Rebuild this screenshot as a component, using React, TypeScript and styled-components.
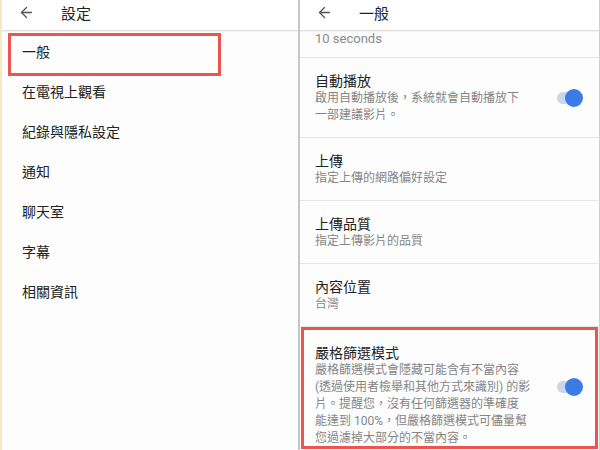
import React from 'react'
import styled, { createGlobalStyle } from 'styled-components'
import { ArrowLeft } from 'lucide-react'

const GlobalStyle = createGlobalStyle`
  body {
    margin: 0;
    background: #fdfdfd;
    font-family: "Roboto", "Noto Sans CJK TC", sans-serif;
  }
`

const Screen = styled.div`
  display: flex;
  width: 600px;
  height: 450px;
  overflow: hidden;
  background: #fdfdfd;
`

const Panel = styled.div<{ $left?: boolean }>`
  display: flex;
  flex-direction: column;
  width: ${p => (p.$left ? '298px' : '302px')};
  flex-shrink: 0;
  overflow: hidden;
  background: #fdfdfd;
  border-left: ${p => (p.$left ? '2px solid #f6e9c2' : '2px solid #c6c6c6')};
  border-right: ${p => (p.$left ? 'none' : '1px solid #cfcfcf')};
  box-sizing: border-box;

  & > * {
    flex-shrink: 0;
  }
`

const Header = styled.div`
  display: flex;
  align-items: center;
  height: 31px;
  padding: 0 0 5px 16px;
  gap: 26px;
  border-bottom: 1px solid #dcdcdc;
  box-shadow: 0 1px 1px rgba(0, 0, 0, 0.04);
  background: #fff;
  box-sizing: border-box;
`

const HeaderTitle = styled.span`
  font-size: 15px;
  color: #222;
`

const MenuItem = styled.div`
  position: relative;
  height: 40px;
  display: flex;
  align-items: center;
  padding-left: 20px;
  font-size: 14px;
  color: #222;
`

const Highlight = styled.div`
  position: absolute;
  left: 6px;
  top: 2px;
  width: 213px;
  height: 43px;
  border: 3px solid #ec5450;
  box-sizing: border-box;
  pointer-events: none;
`

const Note = styled.div`
  height: 27px;
  padding-left: 15px;
  font-size: 13px;
  line-height: 15px;
  color: #8a8a8a;
  border-bottom: 1px solid #e6e6e6;
  box-sizing: border-box;
`

const Row = styled.div<{ $marked?: boolean }>`
  position: relative;
  display: flex;
  align-items: center;
  padding: 14px 16px 13px 15px;
  border-bottom: 1px solid #e6e6e6;
  ${p => p.$marked && 'padding-top: 17px; border-bottom: none;'}
`

const RowMark = styled.div`
  position: absolute;
  left: 1px;
  top: 0;
  right: 1px;
  height: 122px;
  border: 3px solid #ec5450;
  box-sizing: border-box;
  pointer-events: none;
`

const RowText = styled.div`
  flex: 1;
  display: flex;
  flex-direction: column;
`

const RowTitle = styled.div`
  font-size: 14px;
  line-height: 18px;
  color: #222;
`

const RowSub = styled.div`
  font-size: 12px;
  line-height: 17px;
  color: #858585;
  white-space: nowrap;
`

const Toggle = styled.div<{ $lift?: number }>`
  position: relative;
  width: 26px;
  height: 18px;
  flex-shrink: 0;
  margin-bottom: ${p => p.$lift ?? 0}px;

  &::before {
    content: '';
    position: absolute;
    left: 0;
    top: 3px;
    width: 24px;
    height: 12px;
    border-radius: 6px;
    background: #c9d6ee;
  }

  &::after {
    content: '';
    position: absolute;
    right: 0;
    top: 0;
    width: 18px;
    height: 18px;
    border-radius: 50%;
    background: #3b7be6;
  }
`

const menu = ['一般', '在電視上觀看', '紀錄與隱私設定', '通知', '聊天室', '字幕', '相關資訊']

type Setting = { title: string; lines: string[]; toggle?: boolean; marked?: boolean }

const settings: Setting[] = [
  { title: '自動播放', lines: ['啟用自動播放後，系統就會自動播放下', '一部建議影片。'], toggle: true },
  { title: '上傳', lines: ['指定上傳的網路偏好設定'] },
  { title: '上傳品質', lines: ['指定上傳影片的品質'] },
  { title: '內容位置', lines: ['台灣'] },
  {
    title: '嚴格篩選模式',
    lines: [
      '嚴格篩選模式會隱藏可能含有不當內容',
      '(透過使用者檢舉和其他方式來識別) 的影',
      '片。提醒您，沒有任何篩選器的準確度',
      '能達到 100%，但嚴格篩選模式可儘量幫',
      '您過濾掉大部分的不當內容。',
    ],
    toggle: true,
    marked: true,
  },
]

export default function App() {
  return (
    <>
      <GlobalStyle />
      <Screen>
        <Panel $left>
          <Header>
            <ArrowLeft size={17} color="#555" strokeWidth={1.8} />
            <HeaderTitle>設定</HeaderTitle>
          </Header>
          {menu.map((m, i) => (
            <MenuItem key={m}>
              {m}
              {i === 0 && <Highlight />}
            </MenuItem>
          ))}
        </Panel>
        <Panel>
          <Header>
            <ArrowLeft size={17} color="#555" strokeWidth={1.8} />
            <HeaderTitle>一般</HeaderTitle>
          </Header>
          <Note>10 seconds</Note>
          {settings.map(s => (
            <Row key={s.title} $marked={s.marked}>
              {s.marked && <RowMark />}
              <RowText>
                <RowTitle>{s.title}</RowTitle>
                {s.lines.map(l => (
                  <RowSub key={l}>{l}</RowSub>
                ))}
              </RowText>
              {s.toggle && <Toggle $lift={s.marked ? 18 : 0} />}
            </Row>
          ))}
        </Panel>
      </Screen>
    </>
  )
}
